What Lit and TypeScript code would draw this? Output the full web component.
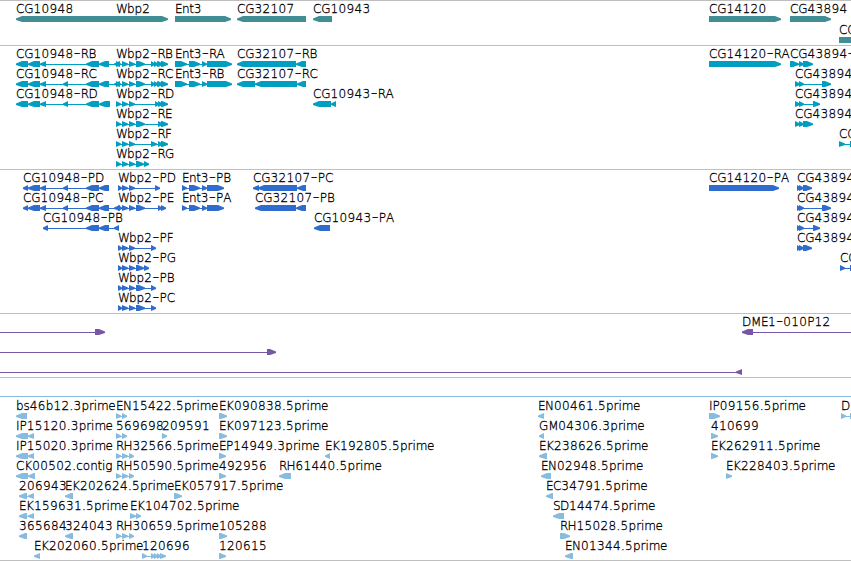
import { LitElement, css, html, svg, nothing } from 'lit';
import { customElement, property } from 'lit/decorators.js';

type Strand = 'f' | 'r';
type Block = [number, number];

interface Feature {
  row: number;
  label?: string;
  strand: Strand;
  blocks: Block[];
  // extent of the connecting line, defaults to the outer ends of the blocks
  line?: Block;
}

interface Track {
  kind: string;
  height: number;
  offset: number;
  pitch: number;
  baseline?: number;
  features: Feature[];
}

const VIEW_WIDTH = 851;
const BAR = 6;
const HEAD = 6;

// pen advance of every character, digits share one width
const DIGIT = 8;
const ADVANCE: Record<string, number> = {
  A: 8, B: 7, C: 8.3, D: 9, E: 7, F: 7, G: 9.3, H: 9, I: 3.4, J: 4, K: 8, M: 10, N: 9, P: 7.3,
  R: 7.6, S: 7, W: 11, '-': 7.2, '.': 4, b: 7.6, c: 6.5, e: 7, g: 7.6, i: 3.3, m: 11.2, n: 7.3,
  o: 7.5, p: 7.6, r: 4.8, s: 6.2, t: 4.4,
};

const penPositions = (text: string, start: number): number[] => {
  let pen = start;
  return [...text].map((char) => {
    const x = pen;
    pen += ADVANCE[char] ?? DIGIT;
    return Number(x.toFixed(1));
  });
};

const f = (row: number, label: string, ...blocks: Block[]): Feature => ({ row, label, strand: 'f', blocks });
const r = (row: number, label: string, ...blocks: Block[]): Feature => ({ row, label, strand: 'r', blocks });

const cgTail: Block[] = [[86, 99], [99, 109]];
const cgHead: Block[] = [[16, 28], [28, 40], [40, 46]];
const wbp: Block[] = [[116, 121], [122, 128], [129, 135]];
const wbpCds: Block[] = [[118, 122], [122, 128], [129, 135]];
const ent: Block[] = [[175, 187], [189, 200], [202, 207], [207, 232]];
const entCds: Block[] = [[182, 187], [189, 200], [202, 207], [207, 224]];

const TRACKS: Track[] = [
  {
    kind: 'gene',
    height: 45,
    offset: 16,
    pitch: 21,
    features: [
      r(0, 'CG10948', [16, 116]),
      f(0, 'Wbp2', [116, 168]),
      f(0, 'Ent3', [175, 231]),
      r(0, 'CG32107', [237, 306]),
      r(0, 'CG10943', [313, 332]),
      f(0, 'CG14120', [709, 781]),
      f(0, 'CG43894', [790, 831]),
      f(1, 'CG', [839, 870]),
    ],
  },
  {
    kind: 'transcript',
    height: 124,
    offset: 16,
    pitch: 20,
    features: [
      r(0, 'CG10948-RB', ...cgHead, ...cgTail, [114, 120]),
      r(1, 'CG10948-RC', ...cgHead, [63, 68], ...cgTail, [114, 120]),
      r(2, 'CG10948-RD', ...cgHead, [63, 68], [86, 99], [99, 110]),
      f(0, 'Wbp2-RB', ...wbp, [136, 145], [151, 155], [154, 158], [157, 161], [158, 163], [161, 168]),
      f(1, 'Wbp2-RC', ...wbp, [136, 145], [151, 155], [154, 158], [157, 161], [158, 163], [161, 168]),
      f(2, 'Wbp2-RD', ...wbp, [155, 159], [158, 163], [161, 168]),
      f(3, 'Wbp2-RE', ...wbp, [136, 145], [158, 163], [161, 168]),
      f(4, 'Wbp2-RF', ...wbp, [151, 157], [158, 163], [161, 168]),
      f(5, 'Wbp2-RG', ...wbp, [136, 144], [144, 149]),
      f(0, 'Ent3-RA', ...ent),
      f(1, 'Ent3-RB', ...ent),
      r(0, 'CG32107-RB', [237, 296], [296, 306]),
      r(1, 'CG32107-RC', [237, 255], [255, 297], [297, 306]),
      r(2, 'CG10943-RA', [313, 331], [331, 336]),
      f(0, 'CG14120-RA', [709, 781]),
      f(0, 'CG43894-', [790, 799], [799, 804], [803, 813]),
      f(1, 'CG43894', [795, 800], [799, 804], [822, 831]),
      f(2, 'CG43894', [795, 800], [799, 804], [813, 820]),
      f(3, 'CG43894', [795, 800], [799, 804], [803, 813]),
      f(4, 'CG', [839, 845], [850, 860]),
    ],
  },
  {
    kind: 'protein',
    height: 144,
    offset: 16,
    pitch: 20,
    features: [
      r(0, 'CG10948-PD', [23, 28], [28, 40], [40, 46], [63, 68], [86, 99], [99, 109]),
      r(1, 'CG10948-PC', [23, 28], [28, 40], [40, 46], [63, 68], ...cgTail, [114, 120]),
      r(2, 'CG10948-PB', [43, 48], ...cgTail, [114, 119]),
      f(0, 'Wbp2-PD', ...wbpCds, [155, 160]),
      f(1, 'Wbp2-PE', ...wbpCds, [136, 145], [158, 162], [161, 166]),
      f(3, 'Wbp2-PF', ...wbpCds, [151, 156]),
      f(4, 'Wbp2-PG', ...wbpCds, [136, 144], [144, 149]),
      f(5, 'Wbp2-PB', ...wbpCds, [136, 145], [151, 156]),
      f(6, 'Wbp2-PC', ...wbpCds, [136, 145], [151, 156]),
      f(0, 'Ent3-PB', ...entCds),
      f(1, 'Ent3-PA', ...entCds),
      r(0, 'CG32107-PC', [253, 259], [258, 297], [297, 306]),
      r(1, 'CG32107-PB', [255, 296], [296, 306]),
      r(2, 'CG10943-PA', [314, 330]),
      f(0, 'CG14120-PA', [709, 779]),
      f(0, 'CG43894', [797, 801], [799, 804], [803, 812]),
      f(1, 'CG43894', [797, 801], [799, 804], [822, 831]),
      f(2, 'CG43894', [797, 801], [799, 804], [813, 820]),
      f(3, 'CG43894', [797, 801], [799, 804], [803, 812]),
      f(4, 'CG', [840, 845], [850, 860]),
    ],
  },
  {
    kind: 'clone',
    height: 64,
    offset: 16,
    pitch: 20,
    features: [
      { row: 0, strand: 'f', blocks: [[95, 105]], line: [0, 100] },
      { row: 1, strand: 'f', blocks: [[267, 276]], line: [0, 270] },
      { row: 2, strand: 'r', blocks: [[736, 742]], line: [0, 740] },
      { row: 0, label: 'DME1-010P12', strand: 'r', blocks: [[742, 753]], line: [750, 851] },
    ],
  },
  {
    kind: 'est',
    height: 183,
    offset: 36,
    pitch: 20,
    baseline: 19,
    features: [
      r(0, 'bs46b12.3prime', [16, 27]),
      r(1, 'IP15120.3prime', [16, 28], [28, 34]),
      r(2, 'IP15020.3prime', [16, 28], [28, 34]),
      r(3, 'CK00502.contig', [16, 28], [28, 35]),
      r(4, '206943', [19, 27], [28, 34]),
      r(5, 'EK159631.5prime', [19, 27], [28, 34]),
      r(6, '365684', [19, 27]),
      r(7, 'EK202060.5prime', [34, 40]),
      r(4, 'EK202624.5prime', [65, 73]),
      r(6, '324043', [65, 73]),
      f(0, 'EN15422.5prime', [116, 121], [122, 127]),
      f(1, '569698', [116, 121], [122, 127]),
      f(2, 'RH32566.5prime', [116, 121], [122, 128], [129, 134]),
      f(3, 'RH50590.5prime', [116, 121], [122, 128], [129, 134]),
      f(6, 'RH30659.5prime', [116, 121], [122, 128], [129, 134]),
      f(5, 'EK104702.5prime', [130, 136], [136, 141]),
      f(7, '120696', [142, 147], [151, 155], [154, 158], [157, 161], [160, 166]),
      f(1, '209591', [162, 167]),
      f(4, 'EK057917.5prime', [174, 182]),
      f(0, 'EK090838.5prime', [219, 227]),
      f(1, 'EK097123.5prime', [219, 227]),
      f(2, 'EP14949.3prime', [219, 226]),
      f(3, '492956', [219, 226]),
      f(6, '105288', [219, 227]),
      f(7, '120615', [219, 226]),
      r(3, 'RH61440.5prime', [279, 291]),
      r(2, 'EK192805.5prime', [325, 330]),
      r(0, 'EN00461.5prime', [538, 544]),
      r(1, 'GM04306.3prime', [539, 544]),
      r(2, 'EK238626.5prime', [539, 547]),
      r(3, 'EN02948.5prime', [541, 551]),
      r(4, 'EC34791.5prime', [546, 553]),
      r(5, 'SD14474.5prime', [553, 564]),
      f(6, 'RH15028.5prime', [560, 570]),
      r(7, 'EN01344.5prime', [565, 573]),
      f(0, 'IP09156.5prime', [709, 720]),
      f(1, '410699', [711, 718]),
      f(2, 'EK262911.5prime', [711, 718]),
      f(3, 'EK228403.5prime', [726, 732]),
      f(0, 'D', [841, 846], [850, 860]),
    ],
  },
];

@customElement('feature-track')
export class FeatureTrackElement extends LitElement {
  @property({ attribute: false })
  track!: Track;

  @property({ type: String, reflect: true })
  kind = '';

  static override styles = css`
    :host {
      display: block;
      box-sizing: border-box;
      border-top: 1px solid #bfbfbf;
      overflow: hidden;
    }

    :host([kind='gene']) {
      color: #408e93;
    }

    :host([kind='transcript']) {
      color: #009ec0;
    }

    :host([kind='protein']) {
      color: #306ccd;
    }

    :host([kind='clone']) {
      color: #7857a6;
    }

    :host([kind='est']) {
      color: #87bcde;
    }

    .canvas {
      display: block;
      fill: currentcolor;
    }

    .label {
      fill: #000;
      stroke: #000;
      stroke-width: 0.3px;
      font-family: 'DejaVu Sans', sans-serif;
      font-size: 12px;
      font-weight: 200;
    }

    .dash {
      font-size: 20px;
      stroke-width: 0.1px;
    }
  `;

  private _renderBlock([start, end]: Block, top: number, strand: Strand) {
    const head = Math.min(HEAD, end - start);
    const mid = top + BAR / 2;
    const bottom = top + BAR;
    const [back, neck, tip] = strand === 'f' ? [start, end - head, end] : [end, start + head, start];
    const points = [[back, top], [neck, top], [tip, mid - 0.5], [tip, mid + 1], [neck, bottom], [back, bottom]];
    return svg`<polygon points=${points.map((p) => p.join(',')).join(' ')}></polygon>`;
  }

  private _renderLabel(label: string, x: number, y: number) {
    const pens = penPositions(label, x);
    const cut = label.indexOf('-');
    if (cut < 0) {
      return svg`<text class="label" x=${pens.join(' ')} y=${y}>${label}</text>`;
    }
    // the hyphen is as wide as a capital, so it gets a larger size
    const rest = label.slice(cut + 1);
    return svg`<text class="label" x=${pens.slice(0, cut).join(' ')} y=${y}>${label.slice(0, cut)}<tspan class="dash" x=${pens[cut]} y=${y + 1}>-</tspan>${rest
      ? svg`<tspan x=${pens.slice(cut + 1).join(' ')} y=${y}>${rest}</tspan>`
      : nothing}</text>`;
  }

  private _renderFeature(feature: Feature) {
    const { offset, pitch } = this.track;
    // the svg starts below the 1px border
    const top = offset + feature.row * pitch - 1;
    const { blocks, label, strand } = feature;
    const [from, to] = feature.line ?? [blocks[0][0] + 2, blocks[blocks.length - 1][1] - 2];
    return svg`
      <rect x=${from} y=${top + 3} width=${to - from} height="1"></rect>
      ${blocks.map((block) => this._renderBlock(block, top, strand))}
      ${label ? this._renderLabel(label, blocks[0][0], top - 3) : nothing}
    `;
  }

  override render() {
    const { height, baseline, features } = this.track;
    return html`
      <svg class="canvas" width=${VIEW_WIDTH} height=${height - 1}>
        ${baseline
          ? svg`<rect x="0" y=${baseline - 1} width=${VIEW_WIDTH} height="1"></rect>`
          : nothing}
        ${features.map((feature) => this._renderFeature(feature))}
      </svg>
    `;
  }
}

@customElement('app-root')
export class AppRootElement extends LitElement {
  static override styles = css`
    :host {
      display: flex;
      flex-direction: column;
      width: 851px;
      height: 561px;
      overflow: hidden;
      background-color: #fff;
    }

    .end {
      height: 1px;
      background-color: #bfbfbf;
    }
  `;

  override render() {
    return html`
      ${TRACKS.map((track) => html`<feature-track kind=${track.kind} .track=${track}></feature-track>`)}
      <div class="end"></div>
    `;
  }
}

declare global {
  interface HTMLElementTagNameMap {
    'feature-track': FeatureTrackElement;
    'app-root': AppRootElement;
  }
}
